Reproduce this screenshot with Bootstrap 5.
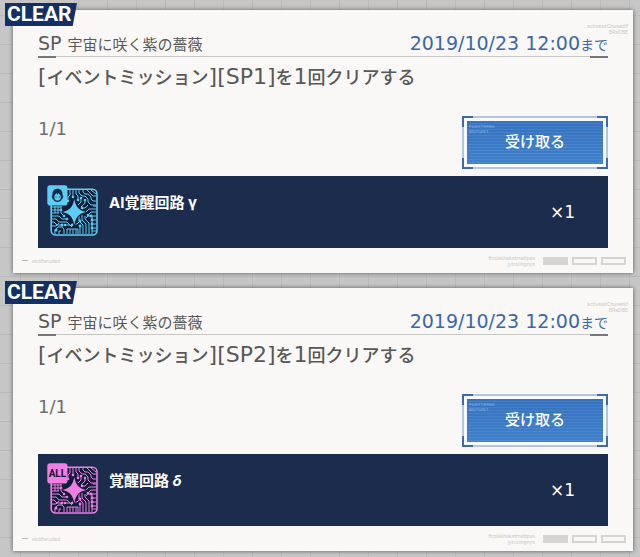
<!DOCTYPE html>
<html lang="ja">
<head>
<meta charset="utf-8">
<meta name="viewport" content="width=device-width, initial-scale=1">
<title>イベントミッション</title>
<link href="https://cdn.jsdelivr.net/npm/bootstrap@5.3.0/dist/css/bootstrap.min.css" rel="stylesheet">
<style>
:root{--navy:#1b2c4d;--ink:#5a5856;--paper:#f9f8f6;--blue:#3a68a6;--wide:"DejaVu Sans","Noto Sans CJK JP",sans-serif}
body{font-family:Inter,"Noto Sans CJK JP",sans-serif;color:var(--ink);background-color:#c6c6c6;
  background-image:linear-gradient(90deg,#b9b9b9 1px,transparent 1px),linear-gradient(#b9b9b9 1px,transparent 1px);
  background-size:29px 29px;background-position:20px 15px}
.board{padding:10px 7px 6px 13px;display:grid;gap:15px}
.mission{background:var(--paper);box-shadow:0 0 4px #555;padding:22px 25px 0}
.clear-tag{left:-8px;top:-7px;width:72px;height:23px;background:#143063;clip-path:polygon(0 0,100% 0,94% 100%,0 100%);
  color:#fff;font:700 21px/23px Roboto,sans-serif;padding-left:2px}
.micro{font-size:5px;line-height:6px;color:#c9c8c6}
.corner-note{right:5px;top:13px}
.head-row{height:25px;border-bottom:1px solid #c9c7c4;position:relative;line-height:22px}
.head-row::before,.head-row::after{content:"";position:absolute;bottom:-2px;width:18px;height:2px;background:#777}
.head-row::before{left:0}.head-row::after{right:0}
.head-name{font-size:15px}
.latin{font-family:var(--wide);font-size:19px}
.until{color:var(--blue);font-size:14px}
.goal{font-size:18px;font-weight:500;line-height:26px;margin:7px 0 0}
.goal .latin{font-size:22px}
.progress-row{height:53px;margin-top:25px}
.count{font-family:var(--wide);font-size:18px;line-height:26px;color:#706e6c}
.claim{width:146px;height:53px;border:0;padding:5px;
  --c:#3e6ba6;
  background:
   linear-gradient(var(--c),var(--c)) 0 0/11px 2px,linear-gradient(var(--c),var(--c)) 0 0/2px 11px,
   linear-gradient(var(--c),var(--c)) 100% 0/11px 2px,linear-gradient(var(--c),var(--c)) 100% 0/2px 11px,
   linear-gradient(var(--c),var(--c)) 0 100%/11px 2px,linear-gradient(var(--c),var(--c)) 0 100%/2px 11px,
   linear-gradient(var(--c),var(--c)) 100% 100%/11px 2px,linear-gradient(var(--c),var(--c)) 100% 100%/2px 11px,
   linear-gradient(#f6fafd,#f6fafd) 50% 50%/142px 49px,#b4c6dd;
  background-repeat:no-repeat}
.claim-face{height:43px;color:#fff;font-size:15px;font-weight:500;
  background:repeating-linear-gradient(transparent 0 2px,#ffffff14 2px 3px),linear-gradient(#3672bf,#3f80cb)}
.claim-note{left:2px;top:3px;color:#8fb9e6;font-weight:400;text-align:left;font-size:4px;line-height:5px}
.reward{background:var(--navy);color:#fff;height:72px;margin-top:7px;padding:9px 33px 0 9px}
.reward svg{width:52px;height:52px;flex:none}
.cyan{color:#5fcdf3}.pink{color:#f07fe4}
.reward-name{font-size:15px;font-weight:700;line-height:22px;margin:7px 0 0 10px}
.amount{font-family:var(--wide);font-size:17px;line-height:22px;margin-top:16px}
.foot{height:25px;margin:0 -18px 0 -16px}
.foot i{width:25px;height:8px;border:2px solid #d5d4d2;margin-left:4px}
.foot i.full{background:#d5d4d2}
.dash{width:6px;height:1px;background:#bbb}
</style>
</head>
<body>
<svg width="0" height="0" class="position-absolute" aria-hidden="true">
  <symbol id="circuit" viewBox="0 0 52 52">
    <rect x="4.2" y="4.2" width="45.8" height="45.8" rx="4.5" fill="#101e38" stroke="currentColor" stroke-width="1.6"/>
    <g fill="none" stroke="currentColor" stroke-width="1">
      <path d="M23 5v5l-2 2v5M26 5v7M29 5v4l2 2v4M32 5v3l3 3h3l3 3v3l3 3h5M36 5v2l2 2h3l3 3v2l2 2h3M40 5l6 6h3M44 5l5 4M34 13v4l-3 3M38 15v3l-4 4M41 20l-3 3h-3M49 24h-7l-3 3h-4M49 27h-5l-3 3M49 21h-3"/>
      <path d="M5 22h9v-1M5 25h9M5 28h7M8 21v7M11 21v7M14 21v7l3 3M5 31h7l3 3h5M5 34h4l3 3h8l3 3M5 37h2l3 3h5M5 41h4l3-3M8 49v-4l3-3h4l2 2v5M12 49v-3h2M20 49v-5h11v5M23 44v5M26 44v5M29 44v5M18 40h5l2 2M25 39h5l3-3"/>
      <path d="M32 31v5l4 4v9M35 30v5l4 4v10M38 31v3l4 4v11M45 31h-4l-2 2M49 31h-4v18M49 35h-4M49 39h-4M49 43h-4M49 46h-4M33 41v8"/>
    </g>
    <g fill="currentColor">
      <circle cx="21" cy="16" r="1.3"/><circle cx="26" cy="12" r="1.3"/><circle cx="31" cy="15" r="1.3"/>
      <circle cx="34" cy="13" r="1.3"/><circle cx="38" cy="15" r="1.3"/><circle cx="35" cy="23" r="1.3"/>
      <circle cx="41" cy="30" r="1.3"/><circle cx="14" cy="25" r="1.3"/><circle cx="17" cy="31" r="1.3"/>
      <circle cx="20" cy="34" r="1.3"/><circle cx="15" cy="40" r="1.5"/><circle cx="9" cy="45" r="1.5"/>
      <circle cx="18" cy="40" r="1.3"/><circle cx="33" cy="36" r="1.4"/><circle cx="33" cy="41" r="1.4"/>
      <circle cx="45" cy="35" r="1.4"/><circle cx="45" cy="39" r="1.4"/><circle cx="45" cy="43" r="1.4"/>
      <circle cx="44" cy="31" r="1.4"/><circle cx="25" cy="40" r="1.3"/>
    </g>
    <path d="M27.3 14C28.800 22 32 25.500 39 27c-7 1.500-10.200 5-11.700 13C25.800 32 22.500 28.500 15.500 27c7-1.500 10.300-5 11.800-13z" fill="currentColor" stroke="#101e38" stroke-width="1.500" paint-order="stroke"/>
    <rect x=".3" y=".3" width="20.200" height="20.200" rx="2.800" fill="currentColor"/>
  </symbol>
</svg>

<main class="board">
  <article class="mission position-relative">
    <span class="clear-tag position-absolute">CLEAR</span>
    <span class="micro corner-note position-absolute text-end">activeasChusedif<br>BRaDBE</span>
    <header class="head-row d-flex justify-content-between align-items-start">
      <span class="head-name"><span class="latin">SP </span>宇宙に咲く紫の薔薇</span>
      <span class="until"><time class="latin" datetime="2019-10-23T12:00">2019/10/23 12:00</time>まで</span>
    </header>
    <h2 class="goal"><span class="latin">[</span>イベントミッション<span class="latin">][SP1]</span>を<span class="latin">1</span>回クリアする</h2>
    <div class="progress-row d-flex justify-content-between align-items-start">
      <span class="count">1/1</span>
      <button type="button" class="claim">
        <span class="claim-face d-flex align-items-center justify-content-center position-relative">
          <span class="claim-note position-absolute" aria-hidden="true">POSITTRANS<br>MOTION:1</span>受け取る
        </span>
      </button>
    </div>
    <div class="reward d-flex align-items-start">
      <svg class="cyan" viewBox="0 0 52 52" role="img" aria-label="AI覚醒回路γ">
        <use href="#circuit"/>
        <path d="M6 14c-1.500-1-1.700-3-.5-4C5 6.500 7.200 3.800 10.500 3.800S16 6.500 15.500 10c1.200 1 1 3-.5 4-.8 2-2.500 3-4.500 3S6.800 16 6 14z" fill="#102c49"/>
        <path d="M7.500 10.500l2-2.500.8 2 1-2 2.300 2.500c.8 3-.8 5-3.100 5s-3.800-2-3-5z" fill="currentColor"/>
        <path d="M8.500 12h1M11.800 12h1" stroke="#102c49" stroke-width="1.200"/>
      </svg>
      <span class="reward-name">AI覚醒回路 γ</span>
      <span class="amount ms-auto">×1</span>
    </div>
    <footer class="foot d-flex align-items-center">
      <span class="dash"></span><span class="micro ms-1">asdifaruded</span>
      <span class="micro ms-auto text-end me-1">ftrolakhakstmattpas<br>jytrolingnys</span>
      <i class="full"></i><i></i><i></i>
    </footer>
  </article>

  <article class="mission position-relative">
    <span class="clear-tag position-absolute">CLEAR</span>
    <span class="micro corner-note position-absolute text-end">activeasChusedif<br>BRaDBE</span>
    <header class="head-row d-flex justify-content-between align-items-start">
      <span class="head-name"><span class="latin">SP </span>宇宙に咲く紫の薔薇</span>
      <span class="until"><time class="latin" datetime="2019-10-23T12:00">2019/10/23 12:00</time>まで</span>
    </header>
    <h2 class="goal"><span class="latin">[</span>イベントミッション<span class="latin">][SP2]</span>を<span class="latin">1</span>回クリアする</h2>
    <div class="progress-row d-flex justify-content-between align-items-start">
      <span class="count">1/1</span>
      <button type="button" class="claim">
        <span class="claim-face d-flex align-items-center justify-content-center position-relative">
          <span class="claim-note position-absolute" aria-hidden="true">POSITTRANS<br>MOTION:1</span>受け取る
        </span>
      </button>
    </div>
    <div class="reward d-flex align-items-start">
      <svg class="pink" viewBox="0 0 52 52" role="img" aria-label="覚醒回路δ">
        <use href="#circuit"/>
        <text x="10.400" y="13.500" text-anchor="middle" font-family="Roboto, sans-serif" font-weight="700" font-size="10" fill="#1c1030">ALL</text>
      </svg>
      <span class="reward-name">覚醒回路 <em>δ</em></span>
      <span class="amount ms-auto">×1</span>
    </div>
    <footer class="foot d-flex align-items-center">
      <span class="dash"></span><span class="micro ms-1">asdifaruded</span>
      <span class="micro ms-auto text-end me-1">ftrolakhakstmattpas<br>jytrolingnys</span>
      <i class="full"></i><i></i><i></i>
    </footer>
  </article>
</main>
<script src="https://cdn.jsdelivr.net/npm/bootstrap@5.3.0/dist/js/bootstrap.bundle.min.js"></script>
</body>
</html>
